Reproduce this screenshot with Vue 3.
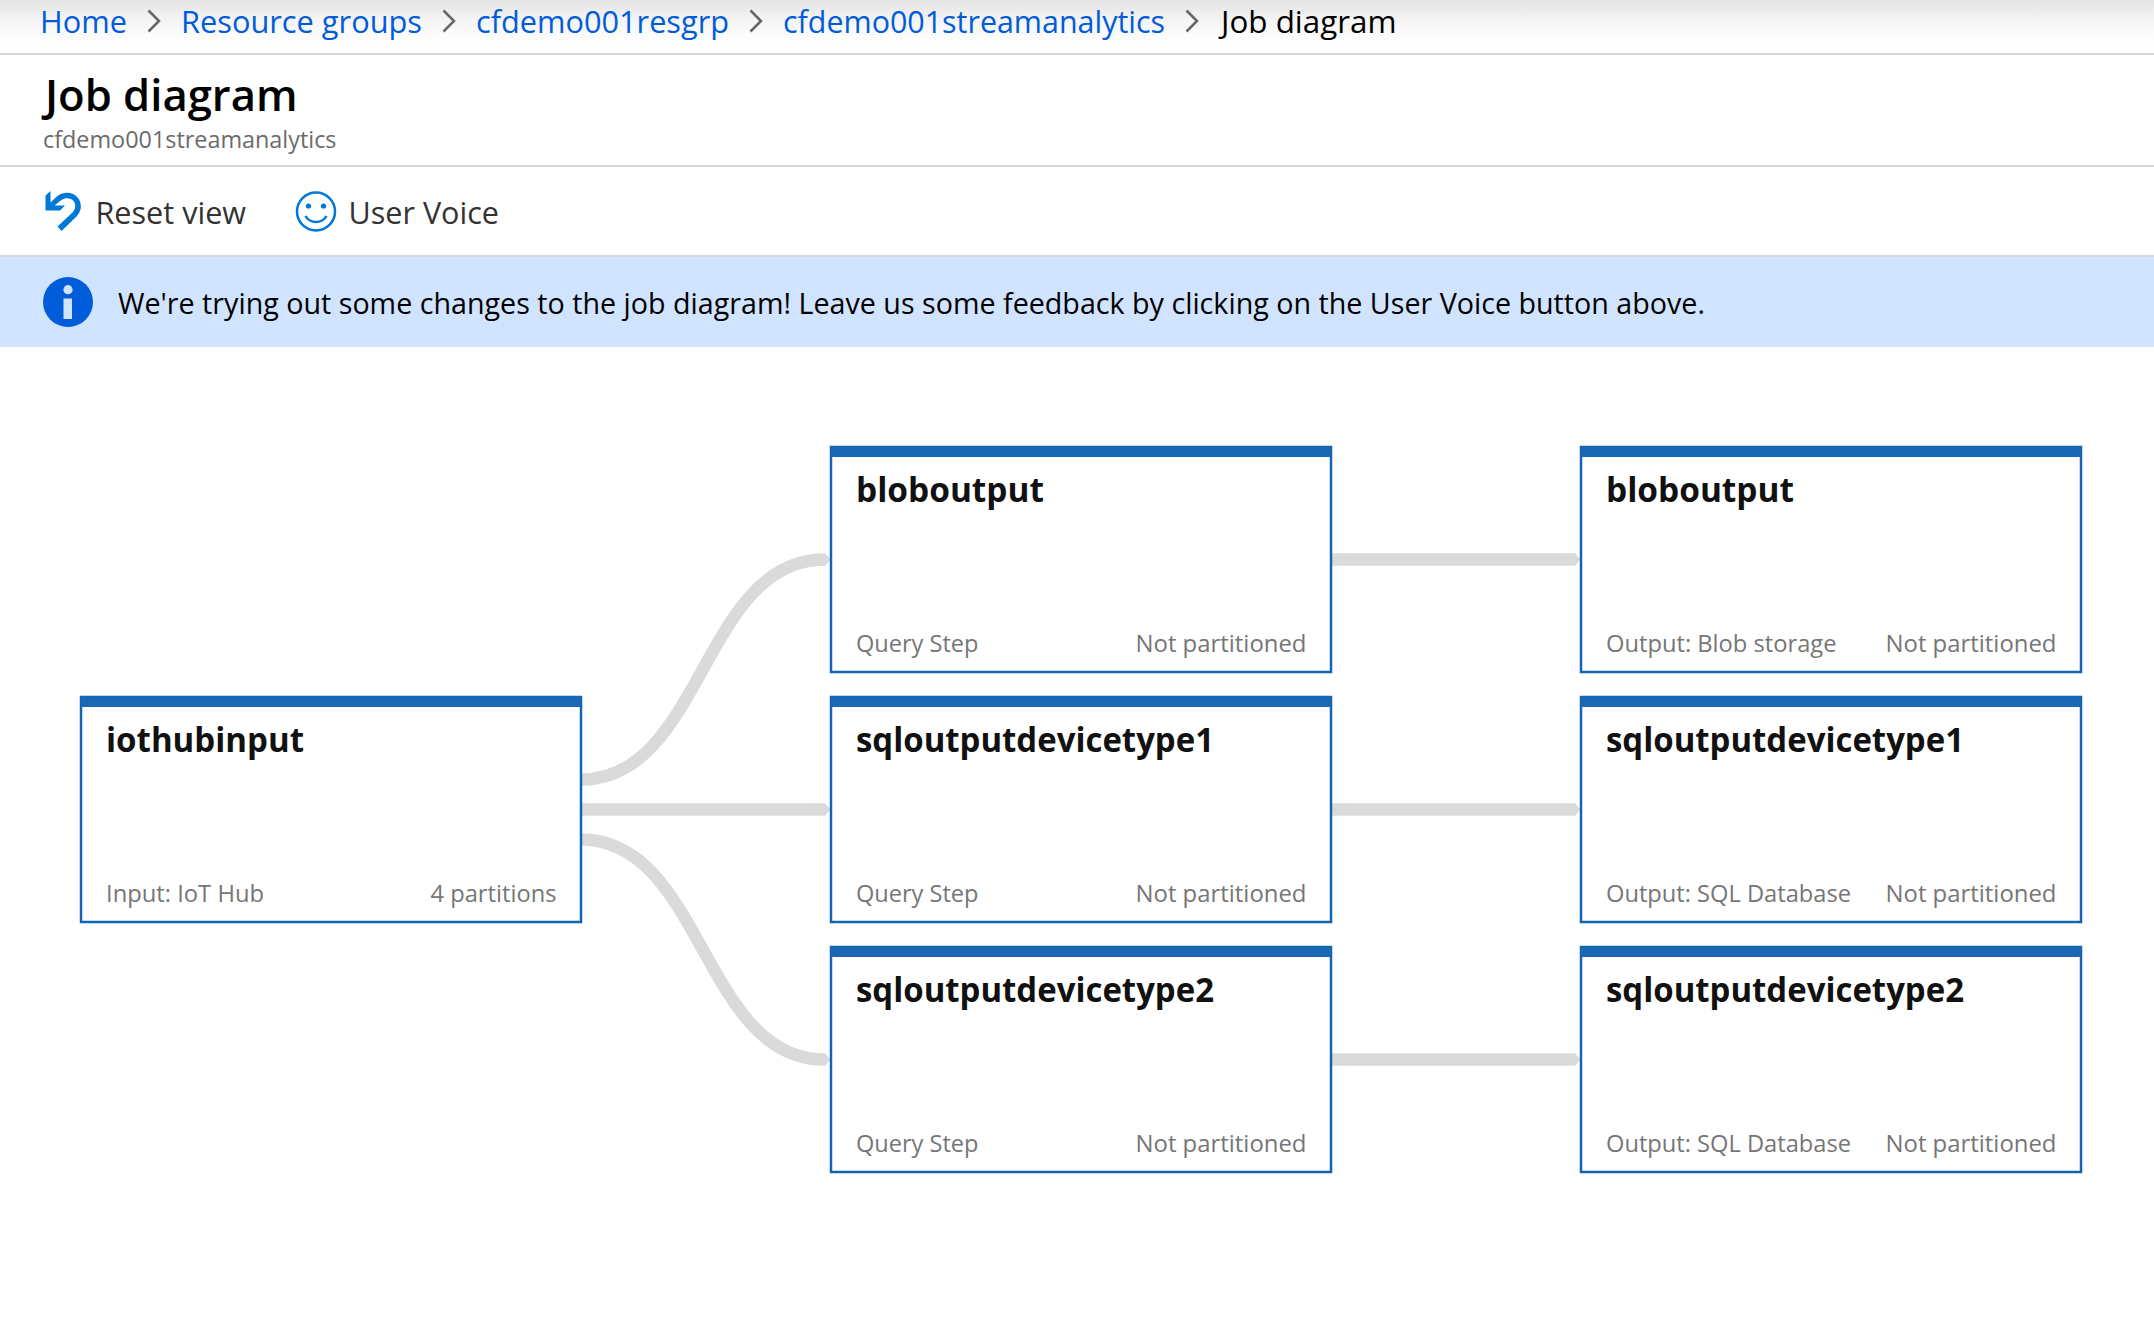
<script setup>
const crumbs = [
  { label: 'Home', width: 87 },
  { label: 'Resource groups', width: 241 },
  { label: 'cfdemo001resgrp', width: 253 },
  { label: 'cfdemo001streamanalytics', width: 382 },
]

const nodes = [
  { x: 81, y: 697, title: 'iothubinput', tw: 198, kind: 'Input: IoT Hub', kw: 158, parts: '4 partitions', pw: 126 },
  { x: 831, y: 447, title: 'bloboutput', tw: 188, kind: 'Query Step', kw: 122.5, parts: 'Not partitioned', pw: 171 },
  { x: 831, y: 697, title: 'sqloutputdevicetype1', tw: 358, kind: 'Query Step', kw: 122.5, parts: 'Not partitioned', pw: 171 },
  { x: 831, y: 947, title: 'sqloutputdevicetype2', tw: 358, kind: 'Query Step', kw: 122.5, parts: 'Not partitioned', pw: 171 },
  { x: 1581, y: 447, title: 'bloboutput', tw: 188, kind: 'Output: Blob storage', kw: 230.5, parts: 'Not partitioned', pw: 171 },
  { x: 1581, y: 697, title: 'sqloutputdevicetype1', tw: 358, kind: 'Output: SQL Database', kw: 245, parts: 'Not partitioned', pw: 171 },
  { x: 1581, y: 947, title: 'sqloutputdevicetype2', tw: 358, kind: 'Output: SQL Database', kw: 245, parts: 'Not partitioned', pw: 171 },
]

const links = [
  [581, 779.5, 824.5, 559.5],
  [581, 809.5, 824.5, 809.5],
  [581, 839.5, 824.5, 1059.5],
  [1331, 559.5, 1574.5, 559.5],
  [1331, 809.5, 1574.5, 809.5],
  [1331, 1059.5, 1574.5, 1059.5],
]

function linkPath([x1, y1, x2, y2]) {
  const mid = (x1 + x2) / 2
  return `M${x1} ${y1}C${mid} ${y1} ${mid} ${y2} ${x2} ${y2}`
}
function tipPath([, , x, y]) {
  return `M${x - 0.5} ${y - 6.25}h1l5.5 6.25l-5.5 6.25h-1z`
}
</script>

<template>
  <div class="page">
    <nav class="crumbs">
      <template v-for="c in crumbs" :key="c.label">
        <a class="crumb"><svg :width="c.width" height="44"><text x="0" y="33" :textLength="c.width" lengthAdjust="spacingAndGlyphs">{{ c.label }}</text></svg></a>
        <svg class="chev" width="14" height="24" viewBox="0 0 14 24"><path d="M1.5 1.5L12 12L1.5 22.5" /></svg>
      </template>
      <span class="crumb current"><svg width="178" height="44"><text x="2" y="33" textLength="175.5" lengthAdjust="spacingAndGlyphs">Job diagram</text></svg></span>
    </nav>

    <header class="head">
      <svg width="600" height="109">
        <text class="title" x="45" y="56" textLength="252.5" lengthAdjust="spacingAndGlyphs">Job diagram</text>
        <text class="sub" x="43" y="92.500" textLength="293.500" lengthAdjust="spacingAndGlyphs">cfdemo001streamanalytics</text>
      </svg>
    </header>

    <div class="tools">
      <button class="tool reset">
        <svg class="icon" width="37" height="41" viewBox="0 0 37 41">
          <path class="undo-head" d="M0.500 4.500L5.500 0V11.500L13 4.500C20 0 28.500 1 33 7C37.500 13 36.500 20.500 31.500 25.500L16.500 40L12.500 35.500L27.500 21.500C31 17.500 31 13 28.500 10C25.500 6.500 20 6.500 16.500 9L9.500 14.500H20L15 19.500H0.500Z" />
        </svg>
        <svg width="150" height="48"><text x="-1.500" y="32.700" textLength="150.500" lengthAdjust="spacingAndGlyphs">Reset view</text></svg>
      </button>
      <button class="tool voice">
        <svg class="icon" width="42" height="42" viewBox="0 0 42 42">
          <circle cx="21" cy="20.500" r="19" class="face" />
          <circle cx="13.500" cy="15" r="2.600" fill="#0078d7" />
          <circle cx="28.500" cy="15" r="2.600" fill="#0078d7" />
          <path d="M10.500 25C15 33 27 33 31.500 25" class="face" />
        </svg>
        <svg width="152" height="48"><text x="-0.500" y="32.700" textLength="150.500" lengthAdjust="spacingAndGlyphs">User Voice</text></svg>
      </button>
    </div>

    <div class="banner">
      <svg class="info" width="50" height="50" viewBox="0 0 50 50">
        <circle cx="25" cy="25" r="25" fill="#015cda" />
        <circle cx="25" cy="12.700" r="4.600" fill="#d0e3ff" />
        <rect x="20.500" y="21.500" width="8.500" height="20.500" fill="#d0e3ff" />
      </svg>
      <svg width="1600" height="60">
        <text x="-1" y="41.500" textLength="1587" lengthAdjust="spacingAndGlyphs">We're trying out some changes to the job diagram! Leave us some feedback by clicking on the User Voice button above.</text>
      </svg>
    </div>

    <svg class="diagram" width="2154" height="979" viewBox="0 347 2154 979">
      <g v-for="(l, i) in links" :key="'l' + i">
        <path class="link" :d="linkPath(l)" />
        <path class="tip" :d="tipPath(l)" />
      </g>
      <g v-for="(n, i) in nodes" :key="'n' + i" :transform="`translate(${n.x} ${n.y})`">
        <rect class="box" width="500" height="225" />
        <rect class="strip" width="500" height="10" />
        <text class="name" x="25" y="54.500" :textLength="n.tw" lengthAdjust="spacingAndGlyphs">{{ n.title }}</text>
        <text class="meta" x="25" y="204.500" :textLength="n.kw" lengthAdjust="spacingAndGlyphs">{{ n.kind }}</text>
        <text class="meta" :x="475.5 - n.pw" y="204.500" :textLength="n.pw" lengthAdjust="spacingAndGlyphs">{{ n.parts }}</text>
      </g>
    </svg>
  </div>
</template>

<style>
body { margin: 0; background: #fff; }
</style>

<style scoped>
.page {
  width: 2154px;
  height: 1326px;
  overflow: hidden;
  background: #fff;
  font-family: "Open Sans", "Noto Sans", sans-serif;
}
svg { display: block; flex: none; overflow: visible; }
.crumbs {
  box-sizing: border-box;
  height: 55px;
  display: flex;
  align-items: flex-start;
  padding-left: 40px;
  border-bottom: 2px solid #d5d5d5;
  background: linear-gradient(#e3e3e3 0, #f3f3f3 18px, #fcfcfc 36px, #fff 52px);
  font-size: 31.5px;
}
.crumb { fill: #015cda; }
.current { fill: #000; }
.chev { margin: 9px 20px 0; }
.chev path { fill: none; stroke: #666; stroke-width: 2.5; }
.head {
  box-sizing: border-box;
  height: 112px;
  border-bottom: 2px solid #d5d5d5;
}
.title { font-size: 44px; font-weight: 600; }
.sub { font-size: 24.5px; fill: #6b6b6b; }
.tools {
  box-sizing: border-box;
  height: 90px;
  display: flex;
  align-items: flex-start;
  gap: 48px;
  padding: 24px 0 0 45px;
  border-bottom: 2px solid #d5d8d8;
}
.tool {
  display: flex;
  border: 0;
  padding: 0;
  background: none;
  font: 31.5px "Open Sans", "Noto Sans", sans-serif;
  fill: #333;
}
.reset { gap: 15px; }
.voice { gap: 12px; }
.undo-head { fill: #0078d7; }
.face { fill: none; stroke: #0078d7; stroke-width: 2.5; }
.banner {
  height: 90px;
  display: flex;
  align-items: center;
  padding-left: 43px;
  gap: 26px;
  background: #d0e3ff;
  font-size: 29.5px;
}
.link { fill: none; stroke: #dadada; stroke-width: 12.5; }
.tip { fill: #dadada; }
.box { fill: #fff; stroke: #1464b4; stroke-width: 2.5; }
.strip { fill: #1a68b3; }
.name { font-size: 34px; font-weight: 700; fill: #111; }
.meta { font-size: 24.5px; fill: #767676; }
</style>
